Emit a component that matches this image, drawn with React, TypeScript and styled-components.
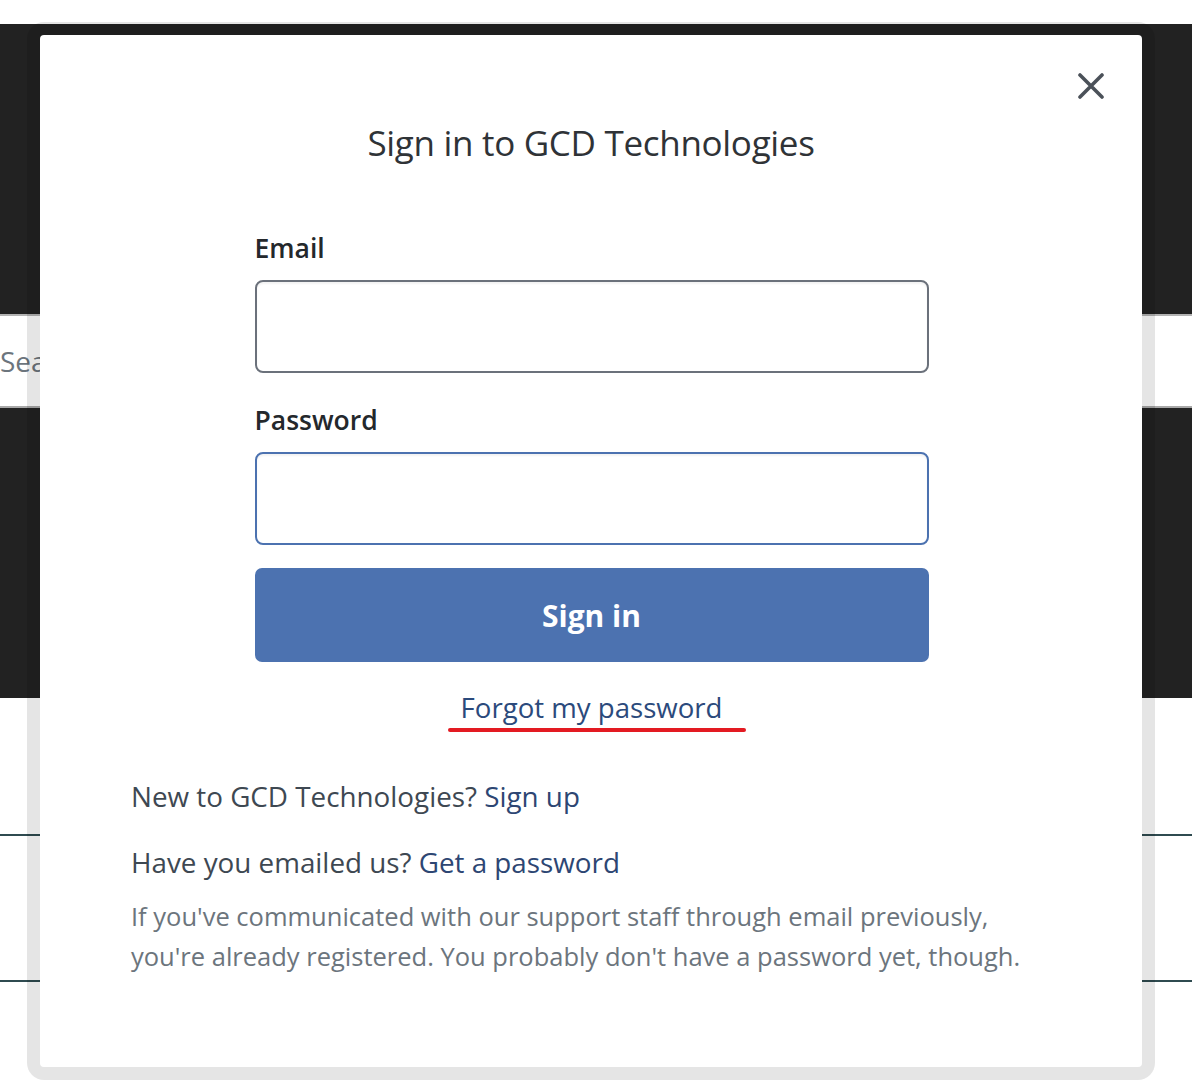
import React from "react";
import styled, { createGlobalStyle } from "styled-components";

const GlobalStyle = createGlobalStyle`
  html, body {
    margin: 0;
    padding: 0;
    background: #ffffff;
    overflow: hidden;
  }
  body {
    font-family: "Open Sans", "Noto Sans", "DejaVu Sans", sans-serif;
  }
  *, *::before, *::after {
    box-sizing: border-box;
  }
`;

const Page = styled.div`
  position: relative;
  width: 1192px;
  height: 1081px;
  overflow: hidden;
  background: #ffffff;
`;

const TopStrip = styled.div`
  height: 24px;
  background: #ffffff;
`;

const DarkBand = styled.div`
  height: 290px;
  background: #222222;
`;

const SearchBar = styled.div`
  height: 94px;
  display: flex;
  align-items: center;
  background: #ffffff;
  border-top: 2px solid #b3b3b3;
  border-bottom: 2px solid #a9a9a9;
`;

const SearchInput = styled.input`
  flex: 1;
  border: none;
  outline: none;
  padding: 0;
  margin: 0;
  background: transparent;
  font-family: "Open Sans", "Noto Sans", sans-serif;
  font-size: 28px;
  color: #333;
  &::placeholder {
    color: #6c757d;
  }
`;

const ListRow = styled.div<{ $height: number }>`
  height: ${(p) => p.$height}px;
  border-bottom: 2px solid #2f4b50;
`;

const Modal = styled.div`
  position: absolute;
  top: 22px;
  left: 27px;
  width: 1128px;
  height: 1058px;
  border: 13px solid rgba(0, 0, 0, 0.1);
  border-radius: 17px;
  background: #ffffff;
  background-clip: padding-box;
`;

const ModalContent = styled.div`
  position: relative;
  height: 100%;
  padding: 88px 91px 0;
  display: flex;
  flex-direction: column;
`;

const CloseButton = styled.button`
  position: absolute;
  top: 38px;
  right: 38px;
  width: 26px;
  height: 26px;
  padding: 0;
  border: none;
  background: none;
  cursor: pointer;
  display: flex;
`;

const Title = styled.h2`
  margin: 0;
  text-align: center;
  font-size: 35px;
  font-weight: 400;
  line-height: 40px;
  letter-spacing: -0.3px;
  color: #2f3337;
`;

const Form = styled.form`
  width: 674px;
  align-self: center;
  margin: 67px 0 0 1px;
  display: flex;
  flex-direction: column;
`;

const Label = styled.label<{ $gap: number }>`
  margin-top: ${(p) => p.$gap}px;
  font-size: 26.5px;
  font-weight: 600;
  line-height: 36px;
  color: #24282c;
`;

const TextInput = styled.input<{ $focused?: boolean }>`
  margin-top: 14px;
  height: 93px;
  width: 100%;
  border: 2px solid ${(p) => (p.$focused ? "#4c72b0" : "#6b717b")};
  border-radius: 8px;
  background: #ffffff;
  box-shadow: inset 0 2px 2px rgba(0, 0, 0, 0.05);
  outline: none;
  padding: 0 18px;
  font-family: inherit;
  font-size: 26px;
`;

const SubmitButton = styled.button`
  margin-top: 23px;
  height: 94px;
  width: 100%;
  border: none;
  border-radius: 7px;
  background: #4c72b0;
  color: #ffffff;
  font-family: inherit;
  font-size: 30px;
  font-weight: 700;
  cursor: pointer;
`;

const ForgotLink = styled.a`
  align-self: center;
  margin-top: 27px;
  display: flex;
  flex-direction: column;
  font-size: 27.6px;
  line-height: 36px;
  color: #2b4a7c;
  text-decoration: none;
  cursor: pointer;
`;

const RedUnderline = styled.span`
  display: block;
  height: 4px;
  margin: 3px -24px 0 -13px;
  border-radius: 2px;
  background: #e31a22;
`;

const InfoLine = styled.p<{ $gap: number }>`
  margin: ${(p) => p.$gap}px 0 0;
  font-size: 27.8px;
  line-height: 40px;
  color: #3e4852;
`;

const InlineLink = styled.a`
  color: #2d4673;
  text-decoration: none;
  cursor: pointer;
`;

const Note = styled.p`
  margin: 14px 0 0;
  font-size: 25.5px;
  line-height: 40px;
  color: #6c757d;
`;

const CloseIcon = () => (
  <svg width="26" height="26" viewBox="0 0 26 26" fill="none">
    <path
      d="M2 2 L24 24 M24 2 L2 24"
      stroke="#4b5159"
      strokeWidth="3.6"
      strokeLinecap="round"
    />
  </svg>
);

export default function App() {
  return (
    <>
      <GlobalStyle />
      <Page>
        <TopStrip />
        <DarkBand />
        <SearchBar>
          <SearchInput placeholder="Search..." />
        </SearchBar>
        <DarkBand />
        <ListRow $height={138} />
        <ListRow $height={146} />

        <Modal role="dialog" aria-modal="true">
          <ModalContent>
            <CloseButton aria-label="Close">
              <CloseIcon />
            </CloseButton>
            <Title>Sign in to GCD Technologies</Title>
            <Form onSubmit={(e) => e.preventDefault()}>
              <Label $gap={0} htmlFor="email">
                Email
              </Label>
              <TextInput id="email" type="email" />
              <Label $gap={29} htmlFor="password">
                Password
              </Label>
              <TextInput id="password" type="password" $focused />
              <SubmitButton type="submit">Sign in</SubmitButton>
              <ForgotLink>
                Forgot my password
                <RedUnderline />
              </ForgotLink>
            </Form>
            <InfoLine $gap={44}>
              New to GCD Technologies? <InlineLink>Sign up</InlineLink>
            </InfoLine>
            <InfoLine $gap={26}>
              Have you emailed us? <InlineLink>Get a password</InlineLink>
            </InfoLine>
            <Note>
              If you've communicated with our support staff through email previously,
              <br />
              you're already registered. You probably don't have a password yet, though.
            </Note>
          </ModalContent>
        </Modal>
      </Page>
    </>
  );
}
